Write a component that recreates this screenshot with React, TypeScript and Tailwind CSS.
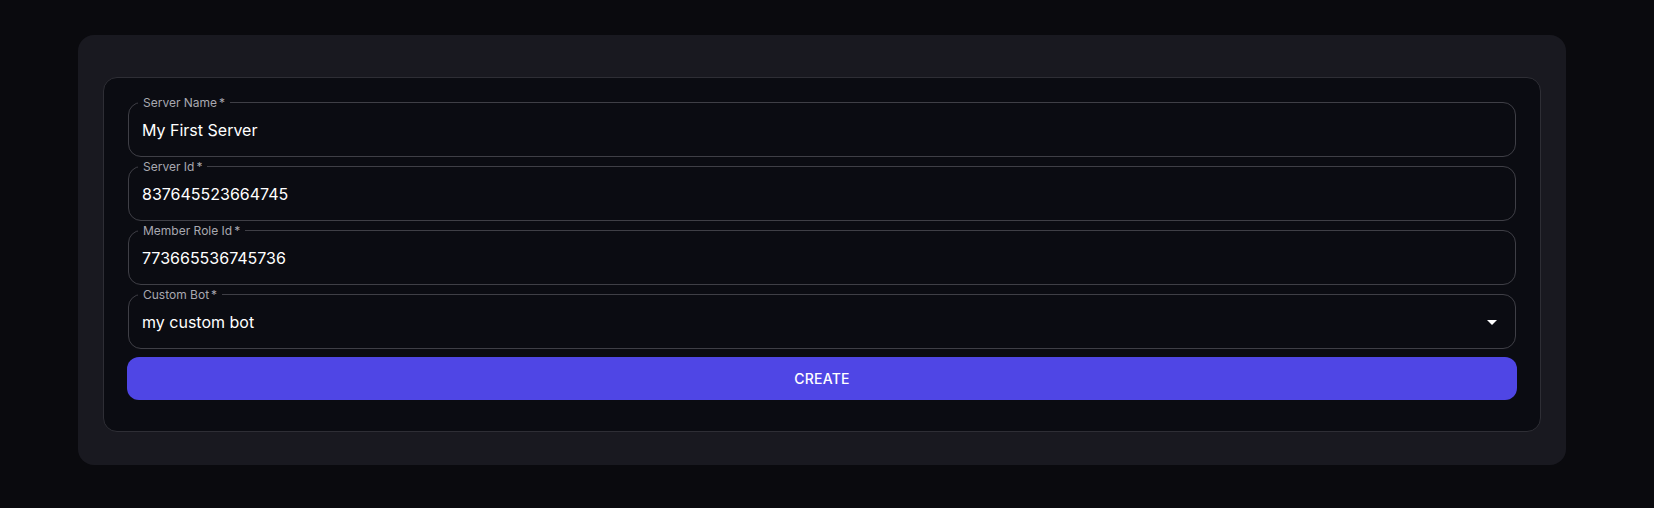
import { useState } from "react";

interface Field {
  label: string;
  value: string;
  select?: boolean;
}

const fields: Field[] = [
  { label: "Server Name", value: "My First Server" },
  { label: "Server Id", value: "837645523664745" },
  { label: "Member Role Id", value: "773665536745736" },
  { label: "Custom Bot", value: "my custom bot", select: true },
];

function OutlinedField({ field }: { field: Field }) {
  return (
    <div className="relative h-[55px] rounded-[13px] border border-[#3f3f46] flex items-center pl-[13px] pr-[18px]">
      <span className="absolute -top-[8px] left-[9px] bg-[#0b0c12] px-[5px] text-[12px] leading-[15px] text-[#a8a8b0]">
        {field.label}
        <span className="ml-[2px]">*</span>
      </span>
      <span className="flex-1 text-[16px] text-white">{field.value}</span>
      {field.select && (
        <svg width="10" height="5" viewBox="0 0 10 5" className="mt-[1px]">
          <path d="M0 0 L10 0 L5 5 Z" fill="#ffffff" />
        </svg>
      )}
    </div>
  );
}

export default function App() {
  const [submitted, setSubmitted] = useState(false);

  return (
    <div
      className="min-h-[508px] w-full bg-[#0a0a0e] pt-[35px] px-[78px]"
      style={{ fontFamily: "Inter, 'Noto Sans', sans-serif" }}
    >
      <div className="w-[1488px] rounded-[16px] bg-[#191920] pt-[42px] pb-[33px] px-[25px]">
        <div className="rounded-[14px] border border-[#2e2e35] bg-[#0b0c12] pt-[24px] pb-[31px] px-[24px]">
          <div className="flex flex-col gap-[9px]">
            {fields.map((f) => (
              <OutlinedField key={f.label} field={f} />
            ))}
          </div>
          <button
            onClick={() => setSubmitted(!submitted)}
            className="mt-[8px] -mx-[1px] w-[calc(100%+2px)] h-[43px] rounded-[12px] bg-[#4f46e5] text-white text-[14px] font-medium tracking-[0.2px]"
          >
            CREATE
          </button>
        </div>
      </div>
    </div>
  );
}
